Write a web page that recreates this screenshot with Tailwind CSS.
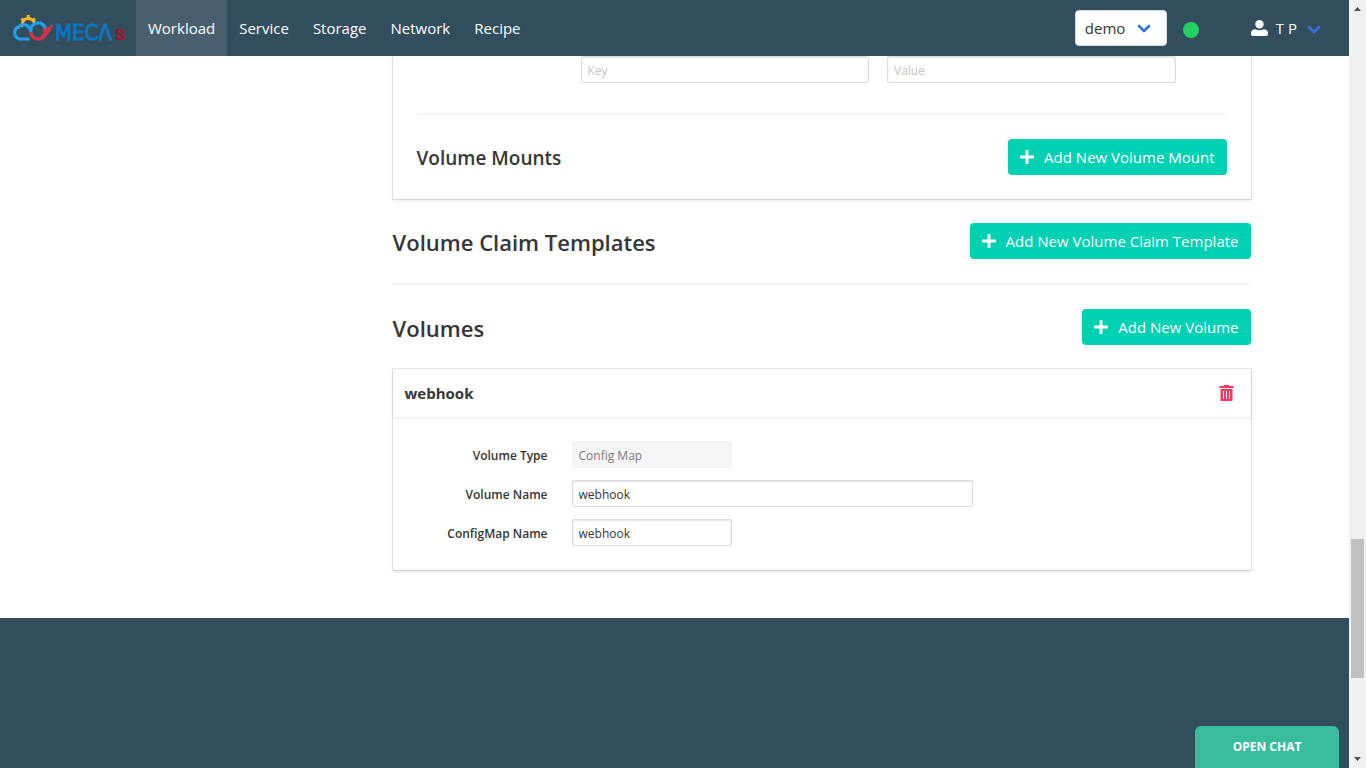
<!DOCTYPE html>
<html lang="en">
<head>
<meta charset="utf-8">
<meta name="viewport" content="width=device-width, initial-scale=1">
<title>MECAs</title>
<script src="https://cdn.jsdelivr.net/npm/@tailwindcss/browser@4"></script>
</head>
<body class="flex h-screen overflow-hidden bg-white font-['Open_Sans',sans-serif] text-[15px] text-[#363636]">
<svg class="hidden" aria-hidden="true">
  <symbol id="plus" viewBox="0 0 448 512"><path fill="currentColor" d="M416 208H272V64c0-17.67-14.33-32-32-32h-32c-17.67 0-32 14.33-32 32v144H32c-17.67 0-32 14.33-32 32v32c0 17.67 14.33 32 32 32h144v144c0 17.67 14.33 32 32 32h32c17.67 0 32-14.33 32-32V304h144c17.67 0 32-14.33 32-32v-32c0-17.67-14.33-32-32-32z"/></symbol>
  <symbol id="chevron" viewBox="0 0 14 9"><path fill="none" stroke="currentColor" stroke-width="2.6" stroke-linecap="round" stroke-linejoin="round" d="M2 2l5 5 5-5"/></symbol>
</svg>

<div class="flex min-w-0 flex-1 flex-col">
  <header class="flex h-14 shrink-0 items-stretch bg-[#324d5e] pl-3 pr-7 text-white">
    <a href="#" aria-label="MECAs home" class="mr-2 flex items-center">
      <svg class="overflow-visible" width="116" height="28" viewBox="0 0 116 28">
        <g fill="none">
          <path stroke="#fbb829" stroke-width="2.8" d="M10.400 12.800A6.300 6.300 0 1 1 22.600 9.800"/>
          <path stroke="#fbb829" stroke-width="3" d="M16.300 4.500V1M11.500 6.500L9.500 4.500M21 6.500l2-2"/>
          <path stroke="#22a0f0" stroke-width="3.200" d="M17.500 25H8A6.400 6.400 0 0 1 7.200 12.600M6 14C7.500 10.500 13 9.500 15.800 12.200L19.500 16.500"/>
          <path stroke="#22a0f0" stroke-width="3.200" d="M18.900 18.500A7.500 7.500 0 1 1 33.600 16.500"/>
          <path stroke="#d03348" stroke-width="3.400" d="M18.700 18C19.500 22.500 22.500 25 26.500 25C32.500 25 34 20.500 35 16.500"/>
        </g>
        <path fill="#d03348" d="M41.500 10.500L30.500 15.500C32.500 18 30.500 20.500 28.500 22L32 24C35.500 22 37 18.500 38.500 16.500z"/>
        <text x="43" y="26" font-family="'DejaVu Sans Condensed', Lato, sans-serif" font-size="22" fill="#0b76c2" stroke="#0b76c2" stroke-width=".9">MECΛ</text>
        <text x="103" y="26" font-family="Roboto, sans-serif" font-size="20" fill="#a01523" stroke="#a01523" stroke-width=".7">s</text>
      </svg>
    </a>
    <nav class="flex items-stretch">
      <a href="#" class="flex items-center bg-[#475f6e] px-3">Workload</a>
      <a href="#" class="flex items-center px-3">Service</a>
      <a href="#" class="flex items-center px-3">Storage</a>
      <a href="#" class="flex items-center px-3">Network</a>
      <a href="#" class="flex items-center px-3">Recipe</a>
    </nav>
    <div class="ml-auto flex items-center">
      <div class="relative">
        <select aria-label="Namespace" class="block h-9 w-[92px] appearance-none rounded border border-[#dbdbdb] bg-white pl-[9px] text-[#363636]"><option>demo</option></select>
        <svg class="pointer-events-none absolute right-4 top-3.5 h-[9px] w-3.5 text-[#3273dc]"><use href="#chevron"/></svg>
      </div>
      <span class="ml-4 mt-1 size-4 rounded-full bg-[#23d160]" role="img" aria-label="Connected"></span>
      <button type="button" class="ml-13 flex items-center">
        <svg class="mr-2 h-4 w-[17px]" viewBox="0 0 17 16" fill="#fff"><circle cx="8.500" cy="4.200" r="4.200"/><path d="M0 14v-1C0 11 1.800 9.300 4.300 9.300c1.300.7 2.700 1 4.200 1s2.900-.3 4.200-1C15.200 9.300 17 11 17 13v1c0 1.300-.7 2-2 2H2c-1.300 0-2-.7-2-2z"/></svg>
        T P
        <svg class="ml-2.5 mt-0.5 h-[9px] w-3.5 text-[#3273dc]"><use href="#chevron"/></svg>
      </button>
    </div>
  </header>

  <main class="mx-auto w-full max-w-[1152px] shrink-0 pb-12 pl-[294px]">
    <section class="px-6 pb-6 shadow-[0_2px_3px_rgba(10,10,10,0.1),0_0_0_1px_rgba(10,10,10,0.1)] [clip-path:inset(0_-4px_-6px_-4px)]">
      <div class="flex gap-[18px] pl-[164px] pr-[51px]">
        <input aria-label="Key" placeholder="Key" class="h-[27px] min-w-0 flex-1 rounded-xs border border-[#dbdbdb] px-1.5 pt-0.5 text-[12px] shadow-[inset_0_1px_2px_rgba(10,10,10,0.1)] placeholder:text-[#c3c3c3]">
        <input aria-label="Value" placeholder="Value" class="h-[27px] min-w-0 flex-1 rounded-xs border border-[#dbdbdb] px-1.5 pt-0.5 text-[12px] shadow-[inset_0_1px_2px_rgba(10,10,10,0.1)] placeholder:text-[#c3c3c3]">
      </div>
      <hr class="mb-6 mt-[30px] h-0.5 border-0 bg-[#f5f5f5]">
      <div class="flex items-center justify-between">
        <h3 class="pt-0.5 text-[19px] font-semibold">Volume Mounts</h3>
        <button type="button" class="flex h-9 items-center rounded bg-[#00d1b2] px-3 text-white"><svg class="mr-2.5 h-4 w-3.5"><use href="#plus"/></svg>Add New Volume Mount</button>
      </div>
    </section>

    <div class="mt-6 flex items-center justify-between">
      <h2 class="pt-0.5 text-[22px] font-semibold">Volume Claim Templates</h2>
      <button type="button" class="flex h-9 items-center rounded bg-[#00d1b2] px-3 text-white"><svg class="mr-2.5 h-4 w-3.5"><use href="#plus"/></svg>Add New Volume Claim Template</button>
    </div>
    <hr class="my-6 h-0.5 border-0 bg-[#f5f5f5]">
    <div class="flex items-center justify-between">
      <h2 class="pt-0.5 text-[22px] font-semibold">Volumes</h2>
      <button type="button" class="flex h-9 items-center rounded bg-[#00d1b2] px-3 text-white"><svg class="mr-2.5 h-4 w-3.5"><use href="#plus"/></svg>Add New Volume</button>
    </div>

    <section class="mt-6 shadow-[0_2px_3px_rgba(10,10,10,0.1),0_0_0_1px_rgba(10,10,10,0.1)]">
      <div class="flex h-12 items-center justify-between pl-3 pr-[17px] shadow-[0_1px_2px_rgba(10,10,10,0.1)]">
        <h3 class="font-bold">webhook</h3>
        <button type="button" aria-label="Delete volume"><svg class="h-4 w-[15px]" viewBox="0 0 15 16"><path fill="#ff3860" fill-rule="evenodd" d="M5 0h5v1h4.500v2H.500V1H5zM1.500 4h12v11.500a.5.5 0 0 1-.5.5H2a.5.5 0 0 1-.5-.5zM4 6v8h1V6zm3 0v8h1V6zm3 0v8h1V6z"/></svg></button>
      </div>
      <form class="grid grid-cols-[131px_1fr] items-center gap-x-6 gap-y-3 p-6 text-[12px]">
        <label for="vtype" class="pt-0.5 text-right font-semibold">Volume Type</label>
        <input id="vtype" disabled value="Config Map" class="h-[27px] w-40 rounded-xs border border-[#f5f5f5] bg-[#f5f5f5] px-1.5 pt-0.5 text-[#7a7a7a]">
        <label for="vname" class="pt-0.5 text-right font-semibold">Volume Name</label>
        <input id="vname" value="webhook" class="h-[27px] w-full max-w-[401px] rounded-xs border border-[#dbdbdb] px-1.5 pt-0.5 shadow-[inset_0_1px_2px_rgba(10,10,10,0.1)]">
        <label for="cname" class="pt-0.5 text-right font-semibold">ConfigMap Name</label>
        <input id="cname" value="webhook" class="h-[27px] w-40 rounded-xs border border-[#dbdbdb] px-1.5 pt-0.5 shadow-[inset_0_1px_2px_rgba(10,10,10,0.1)]">
      </form>
    </section>
  </main>

  <footer class="flex flex-1 items-end justify-end bg-[#324d5e] pr-2.5">
    <button type="button" class="h-[42px] w-36 rounded-t-md bg-[#38bc9b] text-[12px] font-bold text-white">OPEN CHAT</button>
  </footer>
</div>

<!-- Page scrollbar -->
<div class="flex w-[17px] shrink-0 flex-col items-center bg-[#f1f1f1]" aria-hidden="true">
  <svg class="h-[17px] w-[17px]" viewBox="0 0 17 17"><path fill="#505050" d="M5 11h7L8.500 7z"/></svg>
  <div class="grow-[522]"></div>
  <div class="w-[13px] grow-[139] bg-[#c1c1c1]"></div>
  <div class="grow-[73]"></div>
  <svg class="h-[17px] w-[17px]" viewBox="0 0 17 17"><path fill="#505050" d="M5 6h7l-3.500 4z"/></svg>
</div>
</body>
</html>
